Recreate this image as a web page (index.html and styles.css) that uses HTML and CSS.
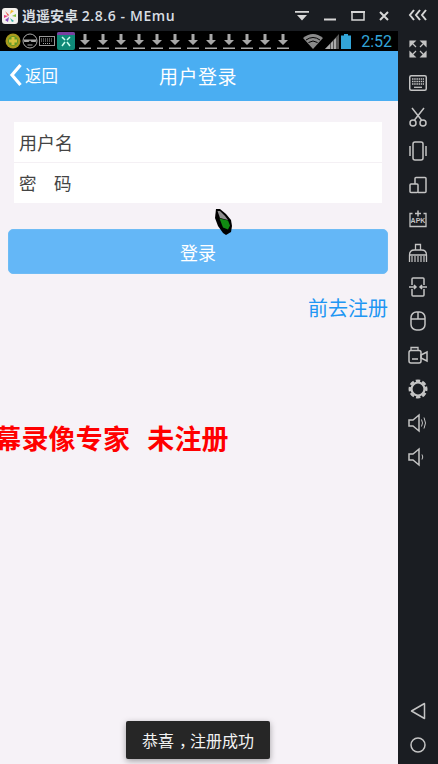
FILE: index.html
```html
<!DOCTYPE html>
<html lang="zh-CN">
<head>
    <meta charset="UTF-8">
    <meta name="viewport" content="width=device-width, initial-scale=1.0">
    <title>用户登录</title>
    <link rel="stylesheet" href="styles.css">
</head>
<body>
    <div class="window">
        <div class="main">
            <div class="titlebar">
                <svg class="app-logo" viewBox="0 0 16 16" width="16" height="16">
                    <rect x="0" y="0" width="16" height="16" rx="3" fill="#f4f1ee"/>
                    <path d="M3 3l4 4-1 1z" fill="#e8483a"/>
                    <path d="M8 6l1-4 3 1z" fill="#f4b92d"/>
                    <path d="M10 8l4-2v3z" fill="#8ac43f"/>
                    <path d="M8 10l4 3-2 1z" fill="#36b0a0"/>
                    <path d="M7 9l-1 5-3-2z" fill="#8b4fc0"/>
                    <path d="M2 7l4 1-4 2z" fill="#e8417f"/>
                </svg>
                <span class="app-name">逍遥安卓 <span class="app-version">2.8.6 - MEmu</span></span>
                <div class="win-controls">
                    <svg viewBox="0 0 14 10" width="14" height="10"><path d="M0 0h14v1.800H0zM2 4h10L7 9.500z" fill="#d6d6d6"/></svg>
                    <svg viewBox="0 0 14 10" width="14" height="10"><path d="M1 8.500h12" stroke="#d6d6d6" stroke-width="2"/></svg>
                    <svg viewBox="0 0 14 10" width="14" height="10"><path d="M1 1h12v8H1z" fill="none" stroke="#d6d6d6" stroke-width="1.500"/><path d="M0 1h14" stroke="#d6d6d6" stroke-width="2"/></svg>
                    <svg viewBox="0 0 10 10" width="10" height="10"><path d="M1 1l8 8M9 1l-8 8" stroke="#d6d6d6" stroke-width="2"/></svg>
                </div>
            </div>

            <div class="statusbar">
                <svg viewBox="0 0 16 16" width="16" height="16"><circle cx="8" cy="8" r="7.5" fill="#a89a1e"/><circle cx="8" cy="8" r="5" fill="#5f9a28"/><path d="M6.500 4h3v2.500H12v3H9.500V12h-3V9.500H4v-3h2.500z" fill="#d7c23a"/></svg>
                <svg viewBox="0 0 16 16" width="16" height="16"><circle cx="8" cy="8" r="7" fill="none" stroke="#aaa" stroke-width="1"/><path d="M1.500 6.500h13l-.8 2.500H9.500L8 7.500 6.500 9H2.300z" fill="#aaa"/><path d="M5.500 12h5" stroke="#aaa"/></svg>
                <svg viewBox="0 0 16 12" width="16" height="12"><rect x="0.500" y="1.500" width="15" height="9" fill="none" stroke="#999"/><path d="M2 4h12M2 6h12M4 8.500h8" stroke="#aaa" stroke-dasharray="1 1"/></svg>
                <svg class="tile" viewBox="0 0 18 18" width="18" height="18"><rect width="18" height="18" rx="2" fill="#0f8a78"/><path d="M0 3V2q0-2 2-2h14q2 0 2 2v1z" fill="#7b3fa0"/><path d="M5 5l3 3M13 5l-3 3M5 14l3-4M13 14l-3-4" stroke="#cfe" stroke-width="1.500"/></svg>
                <div class="downloads">
                    <svg viewBox="0 0 12 16" width="12" height="16" class="dl"><path d="M4.500 1h3v6H11l-5 5-5-5h3.500zM0 14.500h12V16H0z" fill="#a8a8a8"/></svg>
                    <svg viewBox="0 0 12 16" width="12" height="16" class="dl"><path d="M4.500 1h3v6H11l-5 5-5-5h3.500zM0 14.500h12V16H0z" fill="#a8a8a8"/></svg>
                    <svg viewBox="0 0 12 16" width="12" height="16" class="dl"><path d="M4.500 1h3v6H11l-5 5-5-5h3.500zM0 14.500h12V16H0z" fill="#a8a8a8"/></svg>
                    <svg viewBox="0 0 12 16" width="12" height="16" class="dl"><path d="M4.500 1h3v6H11l-5 5-5-5h3.500zM0 14.500h12V16H0z" fill="#a8a8a8"/></svg>
                    <svg viewBox="0 0 12 16" width="12" height="16" class="dl"><path d="M4.500 1h3v6H11l-5 5-5-5h3.500zM0 14.500h12V16H0z" fill="#a8a8a8"/></svg>
                    <svg viewBox="0 0 12 16" width="12" height="16" class="dl"><path d="M4.500 1h3v6H11l-5 5-5-5h3.500zM0 14.500h12V16H0z" fill="#a8a8a8"/></svg>
                    <svg viewBox="0 0 12 16" width="12" height="16" class="dl"><path d="M4.500 1h3v6H11l-5 5-5-5h3.500zM0 14.500h12V16H0z" fill="#a8a8a8"/></svg>
                    <svg viewBox="0 0 12 16" width="12" height="16" class="dl"><path d="M4.500 1h3v6H11l-5 5-5-5h3.500zM0 14.500h12V16H0z" fill="#a8a8a8"/></svg>
                    <svg viewBox="0 0 12 16" width="12" height="16" class="dl"><path d="M4.500 1h3v6H11l-5 5-5-5h3.500zM0 14.500h12V16H0z" fill="#a8a8a8"/></svg>
                    <svg viewBox="0 0 12 16" width="12" height="16" class="dl"><path d="M4.500 1h3v6H11l-5 5-5-5h3.500zM0 14.500h12V16H0z" fill="#a8a8a8"/></svg>
                    <svg viewBox="0 0 12 16" width="12" height="16" class="dl"><path d="M4.500 1h3v6H11l-5 5-5-5h3.500zM0 14.500h12V16H0z" fill="#a8a8a8"/></svg>
                    <svg viewBox="0 0 12 16" width="12" height="16" class="dl"><path d="M4.500 1h3v6H11l-5 5-5-5h3.500zM0 14.500h12V16H0z" fill="#a8a8a8"/></svg>
                </div>
                <div class="status-right">
                    <svg viewBox="0 0 20 15" width="20" height="15"><path d="M0 4q10-8 20 0l-10 11z" fill="#8a8a8a"/><path d="M3 6q7-5 14 0M5.500 8.500q4.500-3 9 0" stroke="#000" stroke-width="1" fill="none"/></svg>
                    <svg viewBox="0 0 14 15" width="14" height="15"><path d="M14 0v15H0z" fill="#555"/><path d="M0 15l5-5v5zM6 9l2-2v8H6zM9 6l2-2v11H9z" fill="#aaa"/></svg>
                    <svg viewBox="0 0 10 15" width="10" height="15"><path d="M3 0h4v1.500h3V15H0V1.500h3z" fill="#33a5d8"/></svg>
                    <span class="clock">2:52</span>
                </div>
            </div>

            <div class="phone">
                <div class="appbar">
                    <div class="back">
                        <svg viewBox="0 0 14 24" width="14" height="24"><path d="M11.500 2L3 12l8.500 10" fill="none" stroke="#fff" stroke-width="3.200"/></svg>
                        <span>返回</span>
                    </div>
                    <div class="appbar-title">用户登录</div>
                </div>

                <div class="content">
                    <div class="form-card">
                        <div class="form-row">用户名</div>
                        <div class="form-row form-row-pass">密　码</div>
                    </div>
                    <button class="login-btn">登录</button>
                    <a class="register-link">前去注册</a>
                </div>

                <div class="watermark">屏幕录像专家<span class="gap"></span>未注册</div>

                <svg class="cursor" viewBox="0 0 20 28" width="20" height="28">
                    <path d="M2 1h4l6 5 5 6 1 6-1 6-5 3-3-2-5-7-3-8z" fill="#000"/>
                    <path d="M3.500 3H6l5 5 3 4-8-2z" fill="#8f8f8f"/>
                    <path d="M5.500 10.500l8.500 2 2 5-2 4-5-2z" fill="#118a12"/>
                </svg>

                <div class="toast">恭喜<span class="toast-comma">，</span>注册成功</div>
            </div>
        </div>

        <div class="sidebar">
            <div class="side-item side-top">
                <svg viewBox="0 0 20 12" width="20" height="12"><path d="M6 1L2 6l4 5M12 1L8 6l4 5M18 1l-4 5 4 5" fill="none" stroke="#d6d6d6" stroke-width="2"/></svg>
            </div>
            <div class="side-item">
                <svg viewBox="0 0 18 18" width="18" height="18"><path d="M1 1h5L1 6zM17 1v5l-5-5zM1 17v-5l5 5zM17 17h-5l5-5zM4 4l3 3M14 4l-3 3M4 14l3-3M14 14l-3-3" fill="#c4c4c4" stroke="#c4c4c4" stroke-width="1.200"/></svg>
            </div>
            <div class="side-item">
                <svg viewBox="0 0 18 16" width="18" height="16"><rect x="0.750" y="0.750" width="16.500" height="14.500" rx="1.500" fill="none" stroke="#c4c4c4" stroke-width="1.500"/><path d="M3 4h12M3 6.500h12M3 9h12" stroke="#c4c4c4" stroke-width="1.300" stroke-dasharray="1.500 .7"/><path d="M5 12.300h8" stroke="#c4c4c4" stroke-width="1.300"/></svg>
            </div>
            <div class="side-item">
                <svg viewBox="0 0 18 20" width="18" height="20"><path d="M3 1l9.500 12M15 1L5.500 13" stroke="#c4c4c4" stroke-width="1.500"/><circle cx="4" cy="16" r="3" fill="none" stroke="#c4c4c4" stroke-width="1.500"/><circle cx="14" cy="16" r="3" fill="none" stroke="#c4c4c4" stroke-width="1.500"/></svg>
            </div>
            <div class="side-item">
                <svg viewBox="0 0 18 20" width="18" height="20"><rect x="4" y="1" width="10" height="18" rx="2" fill="none" stroke="#c4c4c4" stroke-width="1.500"/><path d="M1 5v10M17 5v10" stroke="#c4c4c4" stroke-width="1.500"/></svg>
            </div>
            <div class="side-item">
                <svg viewBox="0 0 18 18" width="18" height="18"><path d="M6 8V2.500q0-1 1-1h9q1 0 1 1v13q0 1-1 1H9" fill="none" stroke="#c4c4c4" stroke-width="1.500"/><rect x="1" y="8" width="8" height="8.500" rx="1" fill="none" stroke="#c4c4c4" stroke-width="1.500"/></svg>
            </div>
            <div class="side-item">
                <div class="apk">
                    <svg viewBox="0 0 18 18" width="18" height="18"><path d="M9 .5v6M6 3.500h6" stroke="#c4c4c4" stroke-width="1.500"/><path d="M1 6V3.500h2.500M17 6V3.500h-2.500M1 5v11.500h16V5" fill="none" stroke="#c4c4c4" stroke-width="1.300"/></svg>
                    <span class="apk-label">APK</span>
                </div>
            </div>
            <div class="side-item">
                <svg viewBox="0 0 20 20" width="20" height="20"><path d="M7.500 7V1.500h5V7M1.500 12q0-5 5-5h7q5 0 5 5zM1.500 12v7M18.500 12v7" fill="none" stroke="#c4c4c4" stroke-width="1.300"/><path d="M4 13v6M7 13v6M10 13v6M13 13v6M16 13v6" stroke="#c4c4c4" stroke-width="1.200"/></svg>
            </div>
            <div class="side-item">
                <svg viewBox="0 0 18 20" width="18" height="20"><path d="M3 8V2q0-1 1-1h10q1 0 1 1v6M3 12v6q0 1 1 1h10q1 0 1-1v-6M0 10h7M11 10h7M5 8l2 2-2 2M13 8l-2 2 2 2" fill="none" stroke="#c4c4c4" stroke-width="1.500"/></svg>
            </div>
            <div class="side-item">
                <svg viewBox="0 0 16 20" width="16" height="20"><rect x="1" y="1" width="14" height="18" rx="5.500" fill="none" stroke="#c4c4c4" stroke-width="1.500"/><path d="M1 8h14M8 1v7" stroke="#c4c4c4" stroke-width="1.500"/></svg>
            </div>
            <div class="side-item">
                <svg viewBox="0 0 20 18" width="20" height="18"><path d="M3 4.500V1.500h7V4.500" fill="none" stroke="#c4c4c4" stroke-width="1.300"/><rect x="1" y="4.500" width="12" height="12.500" rx="2" fill="none" stroke="#c4c4c4" stroke-width="1.500"/><path d="M4 13h6M13 9l6-3v9l-6-3z" fill="none" stroke="#c4c4c4" stroke-width="1.500"/></svg>
            </div>
            <div class="side-item">
                <svg viewBox="0 0 20 20" width="20" height="20"><circle cx="10" cy="10" r="6.500" fill="none" stroke="#c4c4c4" stroke-width="2.200"/><circle cx="10" cy="10" r="8.200" fill="none" stroke="#c4c4c4" stroke-width="2.600" stroke-dasharray="4.300 2.140" transform="rotate(-17 10 10)"/></svg>
            </div>
            <div class="side-item">
                <svg viewBox="0 0 20 20" width="20" height="20"><path d="M1 7h4l6-5v16l-6-5H1z" fill="none" stroke="#c4c4c4" stroke-width="1.500"/><path d="M13.500 6.500q2 3.500 0 7M16 4.500q3 5.500 0 11" fill="none" stroke="#c4c4c4"/></svg>
            </div>
            <div class="side-item">
                <svg viewBox="0 0 20 20" width="20" height="20"><path d="M1 7h4l6-5v16l-6-5H1z" fill="none" stroke="#c4c4c4" stroke-width="1.500"/><path d="M14 7.500q1.500 2.500 0 5" fill="none" stroke="#c4c4c4"/></svg>
            </div>
            <div class="side-item side-nav">
                <svg viewBox="0 0 16 18" width="16" height="18"><path d="M14.500 1.500v15L1.500 9z" fill="none" stroke="#c4c4c4" stroke-width="1.500" stroke-linejoin="round"/></svg>
            </div>
            <div class="side-item">
                <svg viewBox="0 0 16 16" width="16" height="16"><circle cx="8" cy="8" r="7" fill="none" stroke="#c4c4c4" stroke-width="1.500"/></svg>
            </div>
        </div>
    </div>
</body>
</html>
```

FILE: styles.css
```css
html, body {
    margin: 0;
    height: 100%;
    overflow: hidden;
}
body {
    font-family: "Noto Sans CJK SC", "Noto Sans", sans-serif;
    background: #1a1d22;
}
.window {
    display: flex;
    width: 438px;
    height: 764px;
}
.main {
    width: 398px;
    display: flex;
    flex-direction: column;
}

/* title bar */
.titlebar {
    height: 31px;
    display: flex;
    align-items: center;
    padding-left: 1px;
    background: #1a1d22;
    flex-shrink: 0;
}
.app-logo {
    margin-left: 1px;
    margin-right: 4px;
}
.app-name {
    font-family: "Open Sans", "Noto Sans CJK SC", sans-serif;
    font-size: 14px;
    font-weight: 600;
    color: #d8dde2;
    line-height: 31px;
}
.app-version {
    letter-spacing: 0.6px;
}
.win-controls {
    margin-left: auto;
    display: flex;
    align-items: center;
    gap: 14px;
    padding-right: 9px;
}

/* android status bar */
.statusbar {
    height: 20px;
    background: #000;
    display: flex;
    align-items: center;
    padding-left: 5px;
    gap: 1px;
    flex-shrink: 0;
}
.tile {
    margin-left: 1px;
}
.downloads {
    display: flex;
    gap: 6px;
    margin-left: 3px;
}
.status-right {
    margin-left: auto;
    display: flex;
    align-items: center;
    gap: 2px;
    padding-right: 6px;
}
.clock {
    font-family: Roboto, sans-serif;
    font-size: 16px;
    color: #33a5d8;
    margin-left: 8px;
}

/* app */
.phone {
    position: relative;
    flex: 1;
    background: #f6f2f7;
    overflow: hidden;
}
.appbar {
    position: relative;
    height: 50px;
    padding-right: 2px;
    padding-bottom: 2px;
    box-sizing: border-box;
    background: #4aaef2;
    display: flex;
    align-items: center;
    justify-content: center;
    color: #fff;
}
.appbar-title {
    font-size: 19px;
    letter-spacing: 0.5px;
}
.back {
    position: absolute;
    left: 9px;
    top: 12px;
    display: flex;
    align-items: center;
    gap: 2px;
    font-size: 16.500px;
}
.content {
    padding: 21px 10px 0 8px;
    display: flex;
    flex-direction: column;
}
.form-card {
    margin: 0 6px;
    background: #fff;
}
.form-row {
    height: 40px;
    line-height: 40px;
    padding-left: 5px;
    font-size: 18px;
    color: #444;
}
.form-row:first-child {
    border-bottom: 1px solid #f4f0f4;
}
.form-row-pass {
    font-size: 17.500px;
}
.login-btn {
    margin-top: 26px;
    height: 45px;
    border: 1px solid #6fbcf5;
    border-radius: 5px;
    background: #64b7f7;
    color: #fff;
    font-family: inherit;
    font-size: 18px;
    padding: 0;
}
.register-link {
    align-self: flex-end;
    margin-top: 19px;
    font-size: 20px;
    line-height: 29px;
    color: #2196f3;
}

/* overlays */
.watermark {
    position: absolute;
    left: -33px;
    top: 372px;
    font-family: "Liberation Serif", "Noto Sans CJK SC", serif;
    font-size: 27px;
    font-weight: 700;
    line-height: 34px;
    color: #f00;
    white-space: nowrap;
    letter-spacing: 0.2px;
}
.gap {
    display: inline-block;
    width: 17px;
}
.cursor {
    position: absolute;
    left: 214px;
    top: 157px;
}
.toast {
    position: absolute;
    left: 126px;
    top: 670px;
    width: 144px;
    height: 38px;
    line-height: 38px;
    text-align: center;
    font-size: 16px;
    color: #f2f2f2;
    background: #262626;
    border-radius: 2px;
    box-shadow: 0 2px 6px rgba(0, 0, 0, 0.35);
}
.toast-comma {
    display: inline-block;
    box-sizing: border-box;
    width: 16px;
    padding-left: 5px;
    text-align: left;
    font-feature-settings: "halt";
}

/* emulator toolbar */
.sidebar {
    width: 40px;
    display: flex;
    flex-direction: column;
    background: #1a1d22;
}
.side-item {
    height: 34px;
    display: flex;
    align-items: center;
    justify-content: center;
    flex-shrink: 0;
}
.side-top {
    height: 30px;
    margin-bottom: 2px;
}
.side-nav {
    margin-top: auto;
}
.sidebar .side-item:last-child {
    margin-bottom: 2px;
}
.apk {
    position: relative;
    width: 18px;
    height: 18px;
}
.apk svg {
    display: block;
}
.apk-label {
    position: absolute;
    left: 1px;
    right: 1px;
    top: 6px;
    text-align: center;
    font-family: "Liberation Sans", sans-serif;
    font-size: 7px;
    font-weight: 700;
    line-height: 9px;
    color: #c4c4c4;
}
```
